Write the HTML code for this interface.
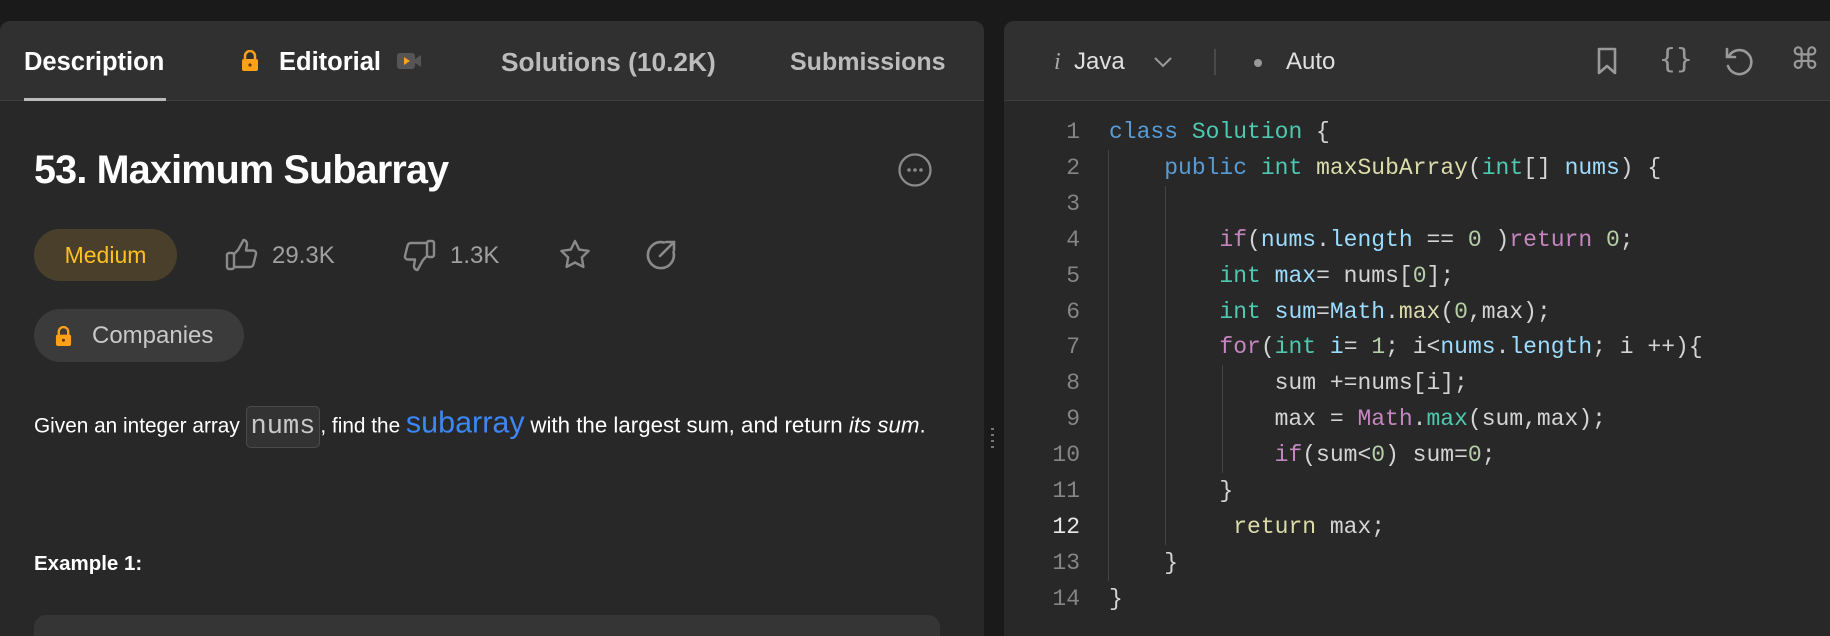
<!DOCTYPE html>
<html><head><meta charset="utf-8"><style>
*{margin:0;padding:0;box-sizing:border-box}
body{width:1830px;height:636px;background:#1a1a1a;overflow:hidden;font-family:"Liberation Sans",sans-serif;position:relative}
.panel{position:absolute;top:21px;background:#282828;border-radius:10px 10px 0 0;overflow:hidden}
.hdr{position:absolute;left:0;top:0;right:0;height:80px;background:#303030;border-bottom:1px solid #3e3e3e}
.a{position:absolute;white-space:nowrap}
.code{font-family:"Liberation Mono","DejaVu Sans Mono",monospace;font-size:23px;color:#d4d4d4;line-height:36px}
.code .a{white-space:pre}
.ln{width:60px;text-align:right;color:#858585}
.k{color:#569cd6}.t{color:#4ec9b0}.f{color:#dcdcaa}.v{color:#9cdcfe}.c{color:#c586c0}.n{color:#b5cea8}
.g{position:absolute;width:1px;background:#444}
.tab{font-size:25.5px;font-weight:bold;line-height:32px;top:25px}
</style></head><body>
<div class="panel" style="left:0;width:984px;height:615px">
 <div class="hdr"></div>
 <div class="a tab" style="left:24px;color:#fff">Description</div>
 <div class="a" style="left:24px;top:77px;width:142px;height:3px;background:#bbb"></div>
 <svg class="a" style="left:241px;top:29px" width="18" height="22" viewBox="0 0 18 22"><path d="M4 10V6a5 5 0 0 1 10 0v4" fill="none" stroke="#ffa116" stroke-width="2.5"/><rect x="1" y="9" width="16" height="12" rx="2" fill="#ffa116"/><circle cx="9" cy="15" r="1.6" fill="#5a3c10"/></svg>
 <div class="a tab" style="left:279px;color:#fff">Editorial</div>
 <svg class="a" style="left:397px;top:31px" width="26" height="18" viewBox="0 0 26 18"><rect x="0" y="1" width="18" height="16" rx="3" fill="#555"/><path d="M18 7l6-4v12l-6-4z" fill="#555"/><path d="M7 5l6 4-6 4z" fill="#ffa116"/></svg>
 <div class="a tab" style="left:501px;color:#bcbcbc;font-size:26.3px">Solutions (10.2K)</div>
 <div class="a tab" style="left:790px;color:#bcbcbc;font-size:25px">Submissions</div>
 <div class="a" style="left:34px;top:126px;font-size:39.5px;font-weight:bold;color:#fff;letter-spacing:-0.8px;line-height:46px">53. Maximum Subarray</div>
 <svg class="a" style="left:897px;top:131px" width="36" height="36" viewBox="0 0 36 36"><circle cx="18" cy="18" r="15.5" fill="none" stroke="#8a8a8a" stroke-width="2.3"/><circle cx="12" cy="18" r="1.8" fill="#8a8a8a"/><circle cx="18" cy="18" r="1.8" fill="#8a8a8a"/><circle cx="24" cy="18" r="1.8" fill="#8a8a8a"/></svg>
 <div class="a" style="left:34px;top:208px;width:143px;height:52px;border-radius:26px;background:#4a3f2b;color:#ffc01e;font-size:23px;line-height:52px;text-align:center">Medium</div>
 <svg class="a" style="left:225px;top:216px" width="36" height="36" viewBox="0 0 36 36" fill="none" stroke="#8a8a8a" stroke-width="2.4" stroke-linejoin="round"><rect x="2" y="16" width="7" height="16" rx="2"/><path d="M9 30h16c2 0 3-1 3.5-3l2.5-10c.4-2-1-3.5-3-3.5h-7l1-6c.3-2.5-1.5-4.5-3.5-4.5L13 13l-4 4"/></svg>
 <div class="a" style="left:272px;top:220px;font-size:24px;color:#a0a0a0;line-height:30px">29.3K</div>
 <svg class="a" style="left:401px;top:218px" width="36" height="36" viewBox="0 0 36 36" fill="none" stroke="#8a8a8a" stroke-width="2.4" stroke-linejoin="round"><rect x="26" y="2" width="7" height="16" rx="2"/><path d="M26 4H10C8 4 7 5 6.5 7L4 17c-.4 2 1 3.5 3 3.5h7l-1 6c-.3 2.5 1.5 4.5 3.5 4.5L22 21l4-4"/></svg>
 <div class="a" style="left:450px;top:220px;font-size:24px;color:#a0a0a0;line-height:30px">1.3K</div>
 <svg class="a" style="left:557px;top:216px" width="36" height="36" viewBox="0 0 36 36"><path d="M18 4l4.2 8.6 9.4 1.3-6.8 6.6 1.6 9.4L18 25.5l-8.4 4.4 1.6-9.4-6.8-6.6 9.4-1.3z" fill="none" stroke="#8a8a8a" stroke-width="2.4" stroke-linejoin="round"/></svg>
 <svg class="a" style="left:644px;top:217px" width="34" height="34" viewBox="0 0 34 34" fill="none" stroke="#8a8a8a" stroke-width="2.6" stroke-linecap="round"><path d="M20 4.5A13 13 0 1 0 29.5 14"/><path d="M16 18L30 4M22 4h8v8"/></svg>
 <div class="a" style="left:34px;top:288px;width:210px;height:53px;border-radius:27px;background:#3b3b3b"></div>
 <svg class="a" style="left:55px;top:305px" width="17" height="21" viewBox="0 0 18 22"><path d="M4 10V6a5 5 0 0 1 10 0v4" fill="none" stroke="#ffa116" stroke-width="2.5"/><rect x="1" y="9" width="16" height="12" rx="2" fill="#ffa116"/><circle cx="9" cy="15" r="1.6" fill="#5a3c10"/></svg>
 <div class="a" style="left:92px;top:300px;font-size:24px;color:#c8c8c8;line-height:30px">Companies</div>
 <div class="a" style="left:34px;top:385px;font-size:20.8px;color:#fff;line-height:32px">Given an integer array <span style="display:inline-block;font-family:'Liberation Mono',monospace;font-size:27px;color:#c8c8c8;background:#333;border:1px solid #4a4a4a;border-radius:5px;padding:0 4px;line-height:40px;vertical-align:middle">nums</span>, find the <span style="color:#3d86f5;font-size:30.5px">subarray</span> <span style="font-size:22.3px">with the largest sum, and return <i>its sum</i>.</span></div>
 <div class="a" style="left:34px;top:531px;font-size:20.5px;font-weight:bold;color:#fff;line-height:24px">Example 1:</div>
 <div class="a" style="left:34px;top:594px;width:906px;height:60px;border-radius:12px;background:#353535"></div>
</div>
<div class="a" style="left:991px;top:428px;width:3px;height:20px;background:repeating-linear-gradient(#777 0 2px,transparent 2px 6px)"></div>
<div class="panel" style="left:1004px;width:840px;height:615px">
 <div class="hdr"></div>
 <div class="a" style="left:50px;top:26px;font-size:24px;color:#aaa;font-style:italic;font-family:'Liberation Serif',serif;line-height:30px">i</div>
 <div class="a" style="left:70px;top:26px;font-size:24px;color:#e0e0e0;line-height:30px">Java</div>
 <svg class="a" style="left:149px;top:35px" width="20" height="12" viewBox="0 0 20 12"><path d="M2 2l8 8 8-8" fill="none" stroke="#999" stroke-width="2"/></svg>
 <div class="a" style="left:210px;top:28px;width:2px;height:26px;background:#4a4a4a"></div>
 <div class="a" style="left:250px;top:38px;width:8px;height:8px;border-radius:4px;background:#999"></div>
 <div class="a" style="left:282px;top:26px;font-size:24px;color:#e0e0e0;line-height:30px">Auto</div>
 <svg class="a" style="left:592px;top:25px" width="22" height="30" viewBox="0 0 22 30"><path d="M3 3h16v24l-8-7-8 7z" fill="none" stroke="#999" stroke-width="2.6" stroke-linejoin="round"/></svg>
 <div class="a" style="left:655px;top:20px;font-size:28px;color:#999;font-family:'DejaVu Sans Mono',monospace;line-height:36px">{}</div>
 <svg class="a" style="left:719px;top:25px" width="32" height="32" viewBox="0 0 32 32" fill="none" stroke="#999" stroke-width="2.6" stroke-linecap="round"><path d="M6 10A12 12 0 1 1 5 20"/><path d="M4 3v8h8"/></svg>
 <div class="a" style="left:786px;top:20px;font-size:30px;color:#999;line-height:38px;font-family:'DejaVu Sans',sans-serif">⌘</div>
</div>
<div class="code">
 <div class="g" style="left:1108px;top:150px;height:431px"></div>
 <div class="g" style="left:1165px;top:186px;height:359px"></div>
 <div class="g" style="left:1222px;top:365px;height:108px"></div>
 <div class="a ln" style="left:1020px;top:114px">1</div>
 <div class="a ln" style="left:1020px;top:150px">2</div>
 <div class="a ln" style="left:1020px;top:186px">3</div>
 <div class="a ln" style="left:1020px;top:222px">4</div>
 <div class="a ln" style="left:1020px;top:258px">5</div>
 <div class="a ln" style="left:1020px;top:294px">6</div>
 <div class="a ln" style="left:1020px;top:329px">7</div>
 <div class="a ln" style="left:1020px;top:365px">8</div>
 <div class="a ln" style="left:1020px;top:401px">9</div>
 <div class="a ln" style="left:1020px;top:437px">10</div>
 <div class="a ln" style="left:1020px;top:473px">11</div>
 <div class="a ln" style="left:1020px;top:509px;color:#e8e8e8">12</div>
 <div class="a ln" style="left:1020px;top:545px">13</div>
 <div class="a ln" style="left:1020px;top:581px">14</div>
 <div class="a" style="left:1109px;top:114px"><span class="k">class</span> <span class="t">Solution</span> {</div>
 <div class="a" style="left:1109px;top:150px">    <span class="k">public</span> <span class="t">int</span> <span class="f">maxSubArray</span>(<span class="t">int</span>[] <span class="v">nums</span>) {</div>
 <div class="a" style="left:1109px;top:222px">        <span class="c">if</span>(<span class="v">nums</span>.<span class="v">length</span> == <span class="n">0</span> )<span class="c">return</span> <span class="n">0</span>;</div>
 <div class="a" style="left:1109px;top:258px">        <span class="t">int</span> <span class="v">max</span>= nums[<span class="n">0</span>];</div>
 <div class="a" style="left:1109px;top:294px">        <span class="t">int</span> <span class="v">sum</span>=<span class="v">Math</span>.<span class="f">max</span>(<span class="n">0</span>,max);</div>
 <div class="a" style="left:1109px;top:329px">        <span class="c">for</span>(<span class="t">int</span> <span class="v">i</span>= <span class="n">1</span>; i&lt;<span class="v">nums</span>.<span class="v">length</span>; i ++){</div>
 <div class="a" style="left:1109px;top:365px">            sum +=nums[i];</div>
 <div class="a" style="left:1109px;top:401px">            max = <span class="c">Math</span>.<span class="t">max</span>(sum,max);</div>
 <div class="a" style="left:1109px;top:437px">            <span class="c">if</span>(sum&lt;<span class="n">0</span>) sum=<span class="n">0</span>;</div>
 <div class="a" style="left:1109px;top:473px">        }</div>
 <div class="a" style="left:1109px;top:509px">         <span class="f">return</span> max;</div>
 <div class="a" style="left:1109px;top:545px">    }</div>
 <div class="a" style="left:1109px;top:581px">}</div>
</div>
</body></html>
